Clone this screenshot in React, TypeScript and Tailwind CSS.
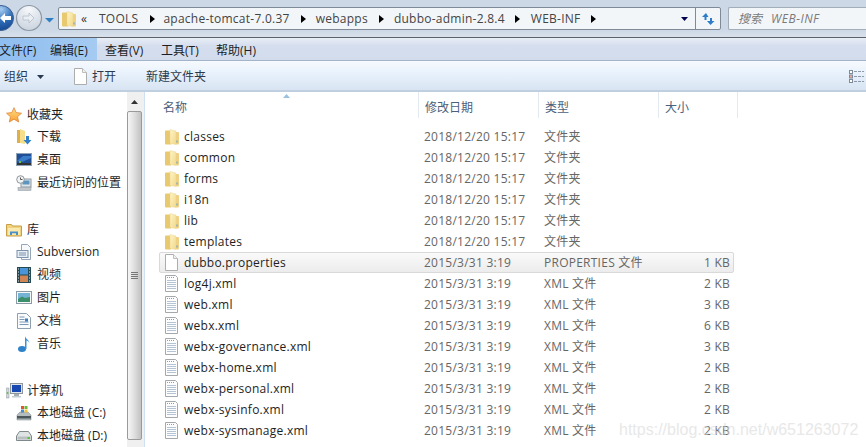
import React from 'react';

const FONT = "font-['Open_Sans','Noto_Sans_CJK_SC',sans-serif]";

const Folder = () => (
  <svg width="14" height="16" viewBox="0 0 14 16" className="shrink-0">
    <defs>
      <linearGradient id="fp" x1="0" y1="0" x2="1" y2="1">
        <stop offset="0" stopColor="#fdf3c4" />
        <stop offset="1" stopColor="#f3da8c" />
      </linearGradient>
    </defs>
    <path d="M0 2.500a1 1 0 0 1 1-1h5V15.500H1a1 1 0 0 1-1-1z" fill="#e9c96f" />
    <path d="M5 .5l6 1.500v13.500l-6-1z" fill="url(#fp)" stroke="#e8d08a" strokeWidth="0.400" />
    <path d="M11 3h2a1 1 0 0 1 1 1v10.500a1 1 0 0 1-1 1h-2z" fill="#eed184" />
    <rect x="11.500" y="11.500" width="1" height="2" fill="#5b9bd5" />
  </svg>
);

const BlankFile = () => (
  <svg width="13" height="17" viewBox="0 0 13 17" className="shrink-0">
    <path d="M.5.5h8l4 4v12H.5z" fill="#fff" stroke="#adadad" />
    <path d="M8.500.5v4h4" fill="#f0f0f0" stroke="#bdbdbd" />
  </svg>
);

const XmlFile = () => (
  <svg width="13" height="17" viewBox="0 0 13 17" className="shrink-0">
    <path d="M.5.5h10l2 2v14H.5z" fill="#fdfdfd" stroke="#a5a8ab" />
    <path d="M2 2.500h8" stroke="#9a9a9a" strokeDasharray="1 1" />
    <path d="M2 5.500h9M2 7.500h9M2 9.500h9M2 11.500h9M2 13.500h9" stroke="#b4c4d4" />
  </svg>
);

const Star = () => (
  <svg width="16" height="16" viewBox="0 0 16 16" className="shrink-0">
    <defs>
      <linearGradient id="st" x1="0" y1="0" x2="0" y2="1">
        <stop offset="0" stopColor="#fde08a" />
        <stop offset="1" stopColor="#f7a02e" />
      </linearGradient>
    </defs>
    <path d="M8 .7l2.200 4.900 5.300.6-4 3.500 1.200 5.300L8 12.200 3.300 15l1.200-5.300-4-3.500 5.300-.6z" fill="url(#st)" stroke="#e2843c" strokeWidth="0.800" />
  </svg>
);

const DownloadIcon = () => (
  <svg width="16" height="16" viewBox="0 0 16 16" className="shrink-0">
    <path d="M1 1h5v13H1z" fill="#dcb04a" />
    <path d="M4 0l5 2v13l-5-1z" fill="#f5dd8b" />
    <path d="M10 7h3v4h2.500L11.500 15.500 7.500 11H10z" fill="#2f80c8" />
  </svg>
);

const DesktopIcon = () => (
  <svg width="16" height="14" viewBox="0 0 16 14" className="shrink-0">
    <rect x="0.500" y="0.500" width="15" height="12" fill="#1e4f97" stroke="#8ea1b6" />
    <path d="M1 10h14v2H1z" fill="#333" />
    <path d="M1 8l6-5 8 0v2L6 9z" fill="#3a7cc8" />
    <rect x="3" y="8" width="2" height="2" fill="#6cc04a" />
  </svg>
);

const RecentIcon = () => (
  <svg width="16" height="16" viewBox="0 0 16 16" className="shrink-0">
    <rect x="5" y="4" width="10" height="8" fill="#dfe6ea" stroke="#8c979f" />
    <rect x="6.500" y="5.500" width="7" height="4" fill="#5b94be" />
    <circle cx="4.500" cy="4.500" r="3.800" fill="#f3f3f3" stroke="#8c979f" />
    <path d="M4.500 2.500v2h2" stroke="#555" fill="none" />
    <rect x="2" y="12.500" width="13" height="3" fill="#bfc5c9" stroke="#8c979f" strokeWidth="0.500" />
  </svg>
);

const LibraryIcon = () => (
  <svg width="16" height="14" viewBox="0 0 16 14" className="shrink-0">
    <path d="M.5 1.500h5l1 1.500h9v10H.5z" fill="#f0d37e" stroke="#c89e47" />
    <path d="M2 5h12v7H2z" fill="#f9e9ae" />
    <path d="M4 12V8.500h8V12h-2v-1.800H6V12z" fill="#4b8fc7" />
  </svg>
);

const SvnIcon = () => (
  <svg width="16" height="16" viewBox="0 0 16 16" className="shrink-0">
    <path d="M5.500.5h6l3 3v12h-9z" fill="#f7f9fb" stroke="#96a6b6" />
    <rect x="1" y="6.500" width="11" height="7" fill="#e7eef5" stroke="#7b93ab" />
    <path d="M3 9h7M3 11h7" stroke="#7b93ab" />
  </svg>
);

const VideoIcon = () => (
  <svg width="14" height="16" viewBox="0 0 14 16" className="shrink-0">
    <rect width="14" height="16" fill="#244a55" />
    <rect x="3" y="1" width="8" height="6.500" fill="#4a95d8" />
    <rect x="3" y="8.500" width="8" height="6.500" fill="#d28554" />
    <path d="M1 2h1M1 5h1M1 8h1M1 11h1M1 14h1M12 2h1M12 5h1M12 8h1M12 11h1M12 14h1" stroke="#dfe8ea" />
  </svg>
);

const PictureIcon = () => (
  <svg width="16" height="13" viewBox="0 0 16 13" className="shrink-0">
    <rect x="0.500" y="0.500" width="15" height="12" fill="#f5f6f7" stroke="#8c9aa6" />
    <rect x="2" y="2" width="12" height="9" fill="#74b3d6" />
    <path d="M2 8l4-2.500 3 1.500 5-1v5H2z" fill="#3c8f6a" />
  </svg>
);

const DocIcon = () => (
  <svg width="14" height="16" viewBox="0 0 14 16" className="shrink-0">
    <path d="M.5.5h9l4 4v11H.5z" fill="#f9fbfd" stroke="#8ea0b0" />
    <path d="M2.500 4h5M2.500 6.500h5M2.500 9h9M2.500 11.500h9" stroke="#7c98b4" />
    <rect x="8" y="5.500" width="3" height="3" fill="#3d7fc0" />
  </svg>
);

const MusicIcon = () => (
  <svg width="14" height="16" viewBox="0 0 14 16" className="shrink-0">
    <ellipse cx="5" cy="13" rx="4" ry="3" fill="#2e82c9" />
    <path d="M8 13V0c.5 3 4.500 3.500 4.500 8 0-2-2-3.500-3-3.500V13z" fill="#3a92d6" />
  </svg>
);

const ComputerIcon = () => (
  <svg width="17" height="16" viewBox="0 0 17 16" className="shrink-0">
    <rect x="0" y="5" width="3" height="10" fill="#cfd6d8" stroke="#8e989c" strokeWidth="0.500" />
    <rect x="0.800" y="9" width="1.500" height="2" fill="#67c24a" />
    <rect x="4.500" y="0.500" width="12" height="10" fill="#dde3e8" stroke="#8e989c" />
    <rect x="6" y="2" width="9" height="7" fill="#1747b0" />
    <rect x="8" y="11" width="5" height="2" fill="#a6adb2" />
    <rect x="6" y="13" width="9" height="1.500" fill="#c5ccd0" />
  </svg>
);

const SystemDisk = () => (
  <svg width="16" height="16" viewBox="0 0 16 16" className="shrink-0">
    <path d="M1 10l3-3h8l3 3v5H1z" fill="#b3bcbf" stroke="#7a8589" strokeWidth="0.500" />
    <rect x="1" y="11" width="14" height="2.500" fill="#4c575b" />
    <rect x="5" y="1" width="3" height="3" fill="#e3542c" />
    <rect x="8.500" y="1" width="3" height="3" fill="#69b93e" />
    <rect x="5" y="4.500" width="3" height="3" fill="#3f8fd8" />
    <rect x="8.500" y="4.500" width="3" height="3" fill="#f3c23a" />
  </svg>
);

const Disk = () => (
  <svg width="16" height="10" viewBox="0 0 16 10" className="shrink-0">
    <path d="M.5 5l3-4.500h9l3 4.500v4.500H.5z" fill="#dfe3e4" stroke="#7f898c" />
    <rect x="1.500" y="5.500" width="13" height="3" fill="#b9bfc1" />
    <rect x="11.500" y="6" width="2.500" height="2" fill="#61c242" />
  </svg>
);

const Sep = () => (
  <svg width="5" height="8" viewBox="0 0 5 8" className="shrink-0">
    <path d="M0 0l5 4-5 4z" fill="#000" />
  </svg>
);

const NavButtons = () => (
  <svg width="58" height="37" viewBox="0 0 58 37" className="shrink-0">
    <defs>
      <radialGradient id="bk" cx="0.500" cy="0.150" r="0.950">
        <stop offset="0" stopColor="#a6cdf2" />
        <stop offset="0.500" stopColor="#2f6db8" />
        <stop offset="1" stopColor="#0f3f86" />
      </radialGradient>
      <radialGradient id="fw" cx="0.500" cy="0.150" r="0.950">
        <stop offset="0" stopColor="#f6f8fb" />
        <stop offset="1" stopColor="#c5cfdb" />
      </radialGradient>
    </defs>
    <circle cx="29" cy="18" r="12.500" fill="url(#fw)" stroke="#8b97a5" strokeWidth="1.200" />
    <circle cx="1" cy="18" r="12.500" fill="url(#bk)" stroke="#3a5f94" />
    <path d="M0 18l5-5v3h6v4H5v3z" fill="#fff" />
    <path d="M34 18l-5-5v3h-6v4h6v3z" fill="#eaeff4" stroke="#b2bcc8" strokeWidth="0.800" />
    <path d="M45 18h9l-4.500 4.500z" fill="#2f7fc4" />
  </svg>
);

const navGroups = [
  {
    head: { icon: <Star />, label: '收藏夹' },
    items: [
      { icon: <DownloadIcon />, label: '下载' },
      { icon: <DesktopIcon />, label: '桌面' },
      { icon: <RecentIcon />, label: '最近访问的位置' },
    ],
  },
  {
    head: { icon: <LibraryIcon />, label: '库' },
    items: [
      { icon: <SvnIcon />, label: 'Subversion' },
      { icon: <VideoIcon />, label: '视频' },
      { icon: <PictureIcon />, label: '图片' },
      { icon: <DocIcon />, label: '文档' },
      { icon: <MusicIcon />, label: '音乐' },
    ],
  },
  {
    head: { icon: <ComputerIcon />, label: '计算机' },
    items: [
      { icon: <SystemDisk />, label: '本地磁盘 (C:)' },
      { icon: <Disk />, label: '本地磁盘 (D:)' },
    ],
  },
];

const files = [
  { name: 'classes', date: '2018/12/20 15:17', type: '文件夹', size: '', kind: 'folder' },
  { name: 'common', date: '2018/12/20 15:17', type: '文件夹', size: '', kind: 'folder' },
  { name: 'forms', date: '2018/12/20 15:17', type: '文件夹', size: '', kind: 'folder' },
  { name: 'i18n', date: '2018/12/20 15:17', type: '文件夹', size: '', kind: 'folder' },
  { name: 'lib', date: '2018/12/20 15:17', type: '文件夹', size: '', kind: 'folder' },
  { name: 'templates', date: '2018/12/20 15:17', type: '文件夹', size: '', kind: 'folder' },
  { name: 'dubbo.properties', date: '2015/3/31 3:19', type: 'PROPERTIES 文件', size: '1 KB', kind: 'blank' },
  { name: 'log4j.xml', date: '2015/3/31 3:19', type: 'XML 文件', size: '2 KB', kind: 'xml' },
  { name: 'web.xml', date: '2015/3/31 3:19', type: 'XML 文件', size: '3 KB', kind: 'xml' },
  { name: 'webx.xml', date: '2015/3/31 3:19', type: 'XML 文件', size: '6 KB', kind: 'xml' },
  { name: 'webx-governance.xml', date: '2015/3/31 3:19', type: 'XML 文件', size: '3 KB', kind: 'xml' },
  { name: 'webx-home.xml', date: '2015/3/31 3:19', type: 'XML 文件', size: '2 KB', kind: 'xml' },
  { name: 'webx-personal.xml', date: '2015/3/31 3:19', type: 'XML 文件', size: '2 KB', kind: 'xml' },
  { name: 'webx-sysinfo.xml', date: '2015/3/31 3:19', type: 'XML 文件', size: '2 KB', kind: 'xml' },
  { name: 'webx-sysmanage.xml', date: '2015/3/31 3:19', type: 'XML 文件', size: '2 KB', kind: 'xml' },
];

const AddressBar = () => (
  <div className="flex h-[37px] items-start bg-[linear-gradient(#ccd8e6,#ccd8e6_80%,#d8e1eb)]">
    <NavButtons />
    <div className="mt-[7px] flex h-[23px] w-[663px] shrink-0 items-center rounded-[2px] border border-[#7f8a96] bg-[#f3f6f9] pl-[3px] text-[12px] tracking-[0.25px] text-[#444]">
      <Folder />
      <span className="ml-[5px] w-[18px] text-[#333]">«</span>
      <span>TOOLS</span>
      <span className="ml-[12px]"><Sep /></span>
      <span className="ml-[8px]">apache-tomcat-7.0.37</span>
      <span className="ml-[11px]"><Sep /></span>
      <span className="ml-[10px]">webapps</span>
      <span className="ml-[11px]"><Sep /></span>
      <span className="ml-[10px]">dubbo-admin-2.8.4</span>
      <span className="ml-[10px]"><Sep /></span>
      <span className="ml-[11px]">WEB-INF</span>
      <span className="ml-[10px]"><Sep /></span>
      <svg width="7" height="4" viewBox="0 0 7 4" className="ml-auto mr-[7px]">
        <path d="M0 0h7L3.500 4z" fill="#000050" />
      </svg>
      <div className="flex h-full w-[25px] items-center justify-center border-l border-[#7f8a96]">
        <svg width="14" height="14" viewBox="0 0 14 14">
          <path d="M5 1L1 5h2.500v3h2V5H7.500z" fill="#2c7cc9" />
          <path d="M9.500 13l4-4H11V6H9v3H6z" fill="#2c7cc9" />
        </svg>
      </div>
    </div>
    <div className="ml-[7px] mt-[7px] flex h-[23px] flex-1 items-center rounded-l-[2px] border border-r-0 border-[#a3adb7] bg-[#f3f6f9] pl-[9px] text-[12px] italic text-[#7a7a7a]">
      搜索<span className="ml-[9px] tracking-[0.5px]">WEB-INF</span>
    </div>
  </div>
);

const MenuBar = () => (
  <div className="flex h-[24px] border-y border-t-[#5d6066] border-b-[#a3b3c8] bg-[linear-gradient(#e9eef6,#d5deee_35%,#d3dcec)] text-[12px] text-[#1e1e1e]">
    <div className="flex h-full w-[97px] items-center bg-[linear-gradient(90deg,#8ebdf0,#a5cbf2)] pt-[4px]">
      <span className="ml-[-1px] w-[51px]">文件(F)</span>
      <span>编辑(E)</span>
    </div>
    <div className="flex items-center pt-[4px]">
      <span className="ml-[8px] w-[56px]">查看(V)</span>
      <span className="w-[55px]">工具(T)</span>
      <span>帮助(H)</span>
    </div>
  </div>
);

const Toolbar = () => (
  <div className="flex h-[31px] items-center border-b-2 border-[#bfcfe0] bg-[linear-gradient(#f6fafe,#e6f0fb_50%,#d8e4f2)] pl-[4px] pt-[2px] text-[12px] text-[#2a3a4e]">
    <span>组织</span>
    <svg width="7" height="4" viewBox="0 0 7 4" className="ml-[9px]">
      <path d="M0 0h7L3.500 4z" fill="#2a3a4e" />
    </svg>
    <span className="ml-[30px] flex"><BlankFile /></span>
    <span className="ml-[5px]">打开</span>
    <span className="ml-[30px]">新建文件夹</span>
    <svg width="15" height="13" viewBox="0 0 15 13" className="ml-auto mr-[2px]">
      <path d="M5 1.500h10M5 6.500h10M5 11.500h10" stroke="#8c99a8" strokeDasharray="3 1" />
      <rect x="0.500" y="0.500" width="3" height="3" fill="#fff" stroke="#7d8a99" />
      <rect x="0.500" y="5" width="3" height="3" fill="#f4a99a" stroke="#7d8a99" />
      <rect x="0.500" y="9.500" width="3" height="3" fill="#fff" stroke="#7d8a99" />
    </svg>
  </div>
);

const Sidebar = () => (
  <div className="flex w-[127px] shrink-0 flex-col overflow-hidden bg-white pt-[12px] text-[12px] text-[#1e1e1e]">
    {navGroups.map((g) => (
      <div key={g.head.label} className="mb-[25px]">
        <div className="flex h-[21px] items-center gap-[5px] pl-[6px]">
          <span className="flex w-[16px] justify-center">{g.head.icon}</span>
          <span className="whitespace-nowrap">{g.head.label}</span>
        </div>
        {g.items.map((it) => (
          <div key={it.label} className="flex h-[23px] items-center gap-[5px] pl-[16px]">
            <span className="flex w-[16px] justify-center">{it.icon}</span>
            <span className="whitespace-nowrap">{it.label}</span>
          </div>
        ))}
      </div>
    ))}
  </div>
);

const Scrollbar = () => (
  <div className="flex w-[18px] shrink-0 flex-col border-r border-[#cfe0f2] bg-[#f0f0f0] pb-[7px] pr-[2px]">
    <div className="flex h-[19px] shrink-0 items-center justify-center">
      <svg width="7" height="4" viewBox="0 0 7 4">
        <path d="M0 4h7L3.500 0z" fill="#333" />
      </svg>
    </div>
    <div className="flex flex-1 items-center justify-center rounded-[2px] border border-[#9a9a9a] bg-[linear-gradient(90deg,#f6f6f6,#dedede_50%,#c2c2c2)]">
      <div className="flex flex-col gap-px">
        <div className="h-px w-[7px] bg-[#777]" />
        <div className="h-px w-[7px] bg-[#777]" />
        <div className="h-px w-[7px] bg-[#777]" />
        <div className="h-px w-[7px] bg-[#777]" />
      </div>
    </div>
  </div>
);

const ListHeader = () => (
  <div className="relative flex h-[26px] text-[12px] text-[#4c607a]">
    <svg width="7" height="4" viewBox="0 0 7 4" className="absolute left-[138px] top-[2px]">
      <path d="M0 4h7L3.500 0z" fill="#9cc0de" />
    </svg>
    <div className="flex w-[273px] items-center pl-[18px] pt-[5px]">名称</div>
    <div className="flex w-[120px] items-center border-l border-[#e3e9f0] pl-[6px] pt-[5px]">修改日期</div>
    <div className="flex w-[120px] items-center border-l border-[#e3e9f0] pl-[6px] pt-[5px]">类型</div>
    <div className="flex w-[80px] items-center border-x border-[#e3e9f0] pl-[6px] pt-[5px]">大小</div>
  </div>
);

const FileRow = ({ f }: { f: (typeof files)[number] }) => {
  const selected = f.name === 'dubbo.properties';
  return (
    <div
      className={
        'ml-[14px] flex h-[21px] w-[575px] items-center rounded-[2px] border tracking-[0.25px] ' +
        (selected
          ? 'border-[#d9d9d9] bg-[linear-gradient(#fafafa,#ececec)]'
          : 'border-transparent')
      }
    >
      <span className="ml-[5px] flex w-[19px] shrink-0">
        {f.kind === 'folder' ? <Folder /> : f.kind === 'blank' ? <BlankFile /> : <XmlFile />}
      </span>
      <span className="w-[240px] shrink-0 whitespace-nowrap text-[#1e1e1e]">{f.name}</span>
      <span className="w-[120px] shrink-0 whitespace-nowrap text-[#666]">{f.date}</span>
      <span className="w-[120px] shrink-0 whitespace-nowrap text-[#666]">{f.type}</span>
      <span className="w-[66px] shrink-0 whitespace-nowrap text-right text-[#666]">{f.size}</span>
    </div>
  );
};

const FileList = () => (
  <div className="relative flex-1 overflow-hidden bg-white text-[12px]">
    <ListHeader />
    <div className="pt-[8px]">
      {files.map((f) => (
        <FileRow key={f.name} f={f} />
      ))}
    </div>
  </div>
);

const App = () => {
  return (
    <div className={'relative flex h-[447px] w-[866px] flex-col overflow-hidden ' + FONT}>
      <AddressBar />
      <MenuBar />
      <Toolbar />
      <div className="flex min-h-0 flex-1">
        <Sidebar />
        <Scrollbar />
        <FileList />
      </div>
      <span className="pointer-events-none absolute left-[619px] top-[418px] font-['Liberation_Sans',sans-serif] text-[16px] text-[#d9d9d9] opacity-60">
        https://blog.csdn.net/w651263072
      </span>
    </div>
  );
};

export default App;
